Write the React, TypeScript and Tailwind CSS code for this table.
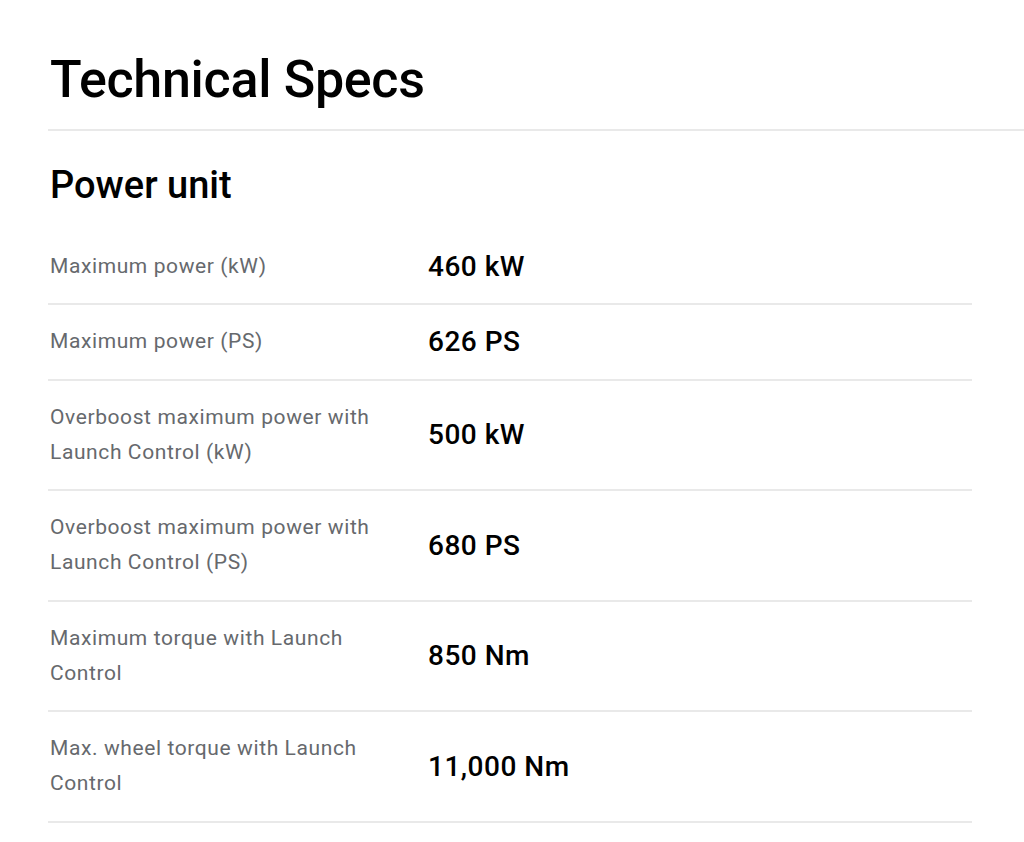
import React from 'react';

interface SpecRow {
  label: string;
  value: string;
}

const rows: SpecRow[] = [
  { label: 'Maximum power (kW)', value: '460 kW' },
  { label: 'Maximum power (PS)', value: '626 PS' },
  { label: 'Overboost maximum power with Launch Control (kW)', value: '500 kW' },
  { label: 'Overboost maximum power with Launch Control (PS)', value: '680 PS' },
  { label: 'Maximum torque with Launch Control', value: '850 Nm' },
  { label: 'Max. wheel torque with Launch Control', value: '11,000 Nm' },
];

const App: React.FC = () => {
  return (
    <div className="min-h-screen bg-white pl-[48px] pt-[48px] font-['Roboto',sans-serif] text-black">
      <h1 className="pl-[2px] text-[52px] font-medium leading-[64px] tracking-[-0.3px]">
        Technical Specs
      </h1>
      <div className="mt-[17px] h-[2px] bg-[#e9e9e9]" />

      <h2 className="mt-[32px] pl-[2px] text-[38px] font-medium leading-[44px]">
        Power unit
      </h2>

      <div className="mt-[23px] w-[924px]">
        {rows.map((row, index) => (
          <div key={index} className="border-b-2 border-[#e9e9e9]">
            <div className="grid grid-cols-[380px_1fr] items-center py-[19px]">
              <div className="max-w-[350px] pl-[2px] text-[21px] leading-[35.25px] tracking-[0.6px] text-[#66696d]">
                {row.label}
              </div>
              <div className="text-[28px] font-medium leading-[35px] tracking-[0.5px]">{row.value}</div>
            </div>
          </div>
        ))}
      </div>
    </div>
  );
};

export default App;
